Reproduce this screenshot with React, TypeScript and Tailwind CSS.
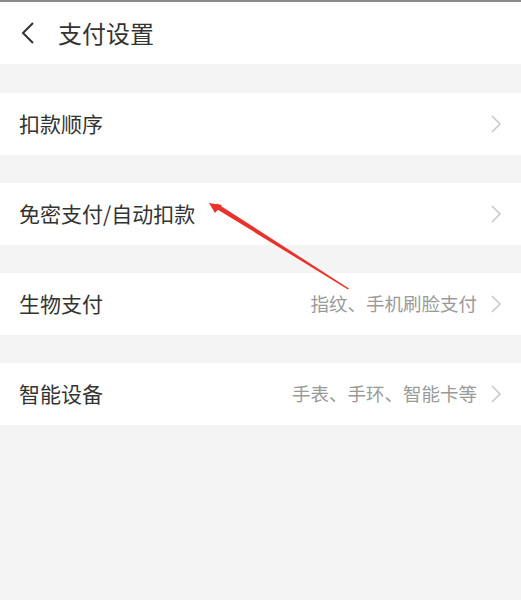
import React from "react";

const font = {
  fontFamily: '"Noto Sans CJK SC", "Noto Sans", sans-serif',
};

interface RowProps {
  label: string;
  hint?: string;
}

const Chevron = () => (
  <svg width="12" height="20" viewBox="0 0 12 20" className="shrink-0">
    <path d="M2 2l8 8-8 8" fill="none" stroke="#c9c9c9" strokeWidth="1.6" />
  </svg>
);

const Row: React.FC<RowProps> = ({ label, hint }) => (
  <div className="flex h-[62px] items-center bg-white pl-[19px] pr-[19px]">
    <span className="flex-1 text-[21px] text-[#333333]">{label}</span>
    {hint && <span className="mr-[13px] text-[18.5px] text-[#9a9a9a]">{hint}</span>}
    <Chevron />
  </div>
);

export default function App() {
  const rows: RowProps[] = [
    { label: "扣款顺序" },
    { label: "免密支付/自动扣款" },
    { label: "生物支付", hint: "指纹、手机刷脸支付" },
    { label: "智能设备", hint: "手表、手环、智能卡等" },
  ];

  return (
    <div className="relative h-[600px] w-[521px] overflow-hidden bg-[#f4f4f4]" style={font}>
      <div className="h-[2px] bg-[#8a8a8a]" />
      {/* Header */}
      <div className="flex h-[62px] items-center bg-white pl-[20px]">
        <svg width="16" height="24" viewBox="0 0 16 24">
          <path d="M13 2L3 12l10 10" fill="none" stroke="#333" strokeWidth="2" />
        </svg>
        <span className="ml-[22px] text-[24px] text-[#333333]">支付设置</span>
      </div>

      <div className="flex flex-col gap-[28px] pt-[29px]">
        {rows.map((r) => (
          <Row key={r.label} {...r} />
        ))}
      </div>

      {/* Red annotation arrow */}
      <svg className="absolute left-0 top-0" width="521" height="600" viewBox="0 0 521 600">
        <polygon points="217,203.5 349,288.5 348,289.5 215,208" fill="#e8322b" />
        <polygon points="209,203 222,205 215,213" fill="#e8322b" />
      </svg>
    </div>
  );
}
